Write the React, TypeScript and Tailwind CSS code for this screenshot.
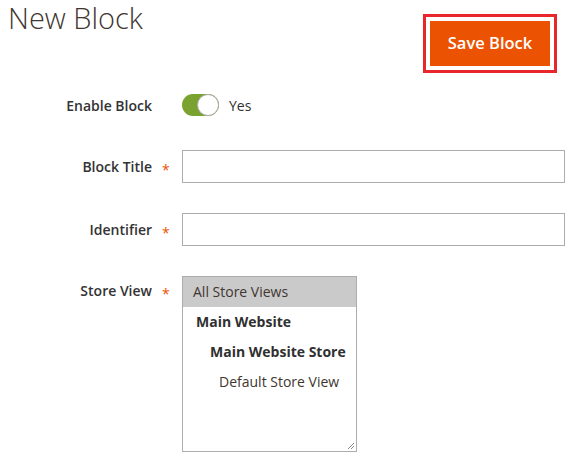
import { useState } from 'react'

const font = { fontFamily: '"Open Sans", "Liberation Sans", sans-serif' }

function Required() {
  return <span className="self-center pl-[10px] pt-[6px] text-[14px] leading-none text-[#eb5202]">*</span>
}

function FieldRow({ label, required, children, top }: { label: string; required?: boolean; children: React.ReactNode; top?: boolean }) {
  return (
    <div className={`flex ${top ? 'items-start' : 'items-center'}`}>
      <div className={`flex w-[182px] ${top ? 'pt-[4px]' : ''}`}>
        <label className="w-[152px] text-right text-[14px] font-semibold text-[#333333]">{label}</label>
        {required ? <Required /> : null}
      </div>
      {children}
    </div>
  )
}

function Toggle({ on, onChange }: { on: boolean; onChange: () => void }) {
  return (
    <button
      type="button"
      onClick={onChange}
      className={`relative h-[22px] w-[37px] rounded-full ${on ? 'bg-[#79a22e]' : 'bg-[#e3e3e3]'}`}
    >
      <span
        className={`absolute top-0 h-[22px] w-[22px] rounded-full border border-[#adadad] bg-white ${on ? 'right-0' : 'left-0'}`}
      />
    </button>
  )
}

const storeOptions = [
  { label: 'All Store Views', pad: 'pl-[10px]', bold: false },
  { label: 'Main Website', pad: 'pl-[13px]', bold: true },
  { label: 'Main Website Store', pad: 'pl-[27px]', bold: true },
  { label: 'Default Store View', pad: 'pl-[36px]', bold: false },
]

export default function App() {
  const [enabled, setEnabled] = useState(true)
  const [selected, setSelected] = useState(0)

  return (
    <div className="h-[460px] w-[575px] overflow-hidden bg-white" style={font}>
      <div className="flex items-start justify-between pr-[18px]">
        <h1 className="pl-[8px] text-[29px] font-light leading-[36px] text-[#41362f]">New Block</h1>
        <div className="mt-[14px] border-[3px] border-[#e9262b] p-[4px]">
          <button className="h-[45px] w-[120px] bg-[#eb5202] text-[16.5px] font-semibold text-white">Save Block</button>
        </div>
      </div>

      <div className="mt-[21px] flex flex-col">
        <FieldRow label="Enable Block">
          <div className="flex items-center gap-[10px]">
            <Toggle on={enabled} onChange={() => setEnabled(!enabled)} />
            <span className="text-[14px] text-[#303030]">{enabled ? 'Yes' : 'No'}</span>
          </div>
        </FieldRow>

        <div className="mt-[34px]">
          <FieldRow label="Block Title" required>
            <input className="h-[33px] w-[383px] border border-[#adadad] bg-white px-[10px] text-[14px] outline-none" />
          </FieldRow>
        </div>

        <div className="mt-[30px]">
          <FieldRow label="Identifier" required>
            <input className="h-[33px] w-[383px] border border-[#adadad] bg-white px-[10px] text-[14px] outline-none" />
          </FieldRow>
        </div>

        <div className="mt-[30px]">
          <FieldRow label="Store View" required top>
            <div className="relative h-[176px] w-[175px] border border-[#adadad] bg-white">
              {storeOptions.map((opt, i) => (
                <div
                  key={opt.label}
                  onClick={() => setSelected(i)}
                  className={`flex h-[30px] items-center pb-[2px] text-[14px] ${opt.pad} ${opt.bold ? 'font-bold text-[#303030]' : 'text-[#41362f]'} ${selected === i ? 'bg-[#cacaca]' : ''}`}
                >
                  {opt.label}
                </div>
              ))}
              <svg className="absolute bottom-[1px] right-[1px]" width="9" height="9" viewBox="0 0 9 9">
                <path d="M8 2L2 8M8 5L5 8" stroke="#8a8a8a" strokeWidth="1" />
              </svg>
            </div>
          </FieldRow>
        </div>
      </div>
    </div>
  )
}
